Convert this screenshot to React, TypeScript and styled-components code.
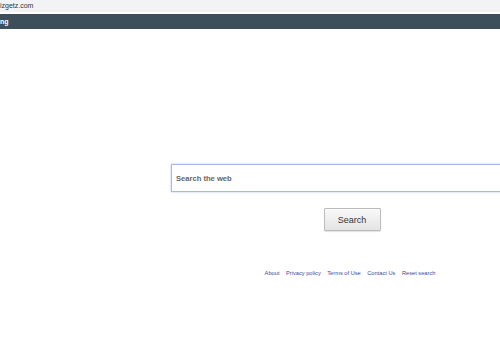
import styled, { createGlobalStyle } from "styled-components";

const GlobalStyle = createGlobalStyle`
  html, body {
    margin: 0;
    padding: 0;
    background: #ffffff;
    overflow: hidden;
  }
  body {
    font-family: "Liberation Sans", Arial, sans-serif;
  }
`;

const Page = styled.div`
  width: 500px;
  height: 350px;
  overflow: hidden;
`;

const AddressBar = styled.div`
  height: 12px;
  line-height: 12px;
  background: #f1f3f4;
  color: #333;
  font-size: 7px;
  margin-bottom: 2px;
`;

const NavBar = styled.div`
  height: 15px;
  line-height: 15px;
  background: #3e4f5c;
  color: #ffffff;
  font-size: 7px;
  font-weight: bold;
`;

const Column = styled.div`
  margin-left: 171px;
  width: 362px;
  padding-top: 135px;
  display: flex;
  flex-direction: column;
  align-items: center;
`;

const SearchInput = styled.input`
  box-sizing: border-box;
  width: 100%;
  height: 28px;
  padding: 0 4px;
  border: 1px solid #a3bbe8;
  box-shadow: 0 0 2px rgba(110, 150, 225, 0.55);
  outline: none;
  font-family: "Liberation Sans", Arial, sans-serif;
  font-size: 7.6px;
  font-weight: bold;
  color: #666;
  &::placeholder {
    color: #666;
  }
`;

const SearchButton = styled.button`
  margin-top: 16px;
  width: 57px;
  height: 23px;
  padding: 0;
  background: linear-gradient(#f9f9f9, #e4e4e4);
  border: 1px solid #bcbcbc;
  border-radius: 1px;
  box-shadow: 0 1px 1px rgba(0, 0, 0, 0.12);
  font-family: "Liberation Sans", Arial, sans-serif;
  font-size: 9px;
  color: #333;
`;

const Links = styled.div`
  margin-top: 39px;
  margin-right: 4px;
  display: flex;
  gap: 6.5px;
  font-size: 5.7px;
  line-height: 7px;
`;

const Link = styled.a`
  color: #3a4ca3;
  text-decoration: none;
`;

const links = ["About", "Privacy policy", "Terms of Use", "Contact Us", "Reset search"];

function App() {
  return (
    <Page>
      <GlobalStyle />
      <AddressBar>izgetz.com</AddressBar>
      <NavBar>ng</NavBar>
      <Column>
        <SearchInput placeholder="Search the web" />
        <SearchButton>Search</SearchButton>
        <Links>
          {links.map((l) => (
            <Link key={l} href="#">{l}</Link>
          ))}
        </Links>
      </Column>
    </Page>
  );
}

export default App;
